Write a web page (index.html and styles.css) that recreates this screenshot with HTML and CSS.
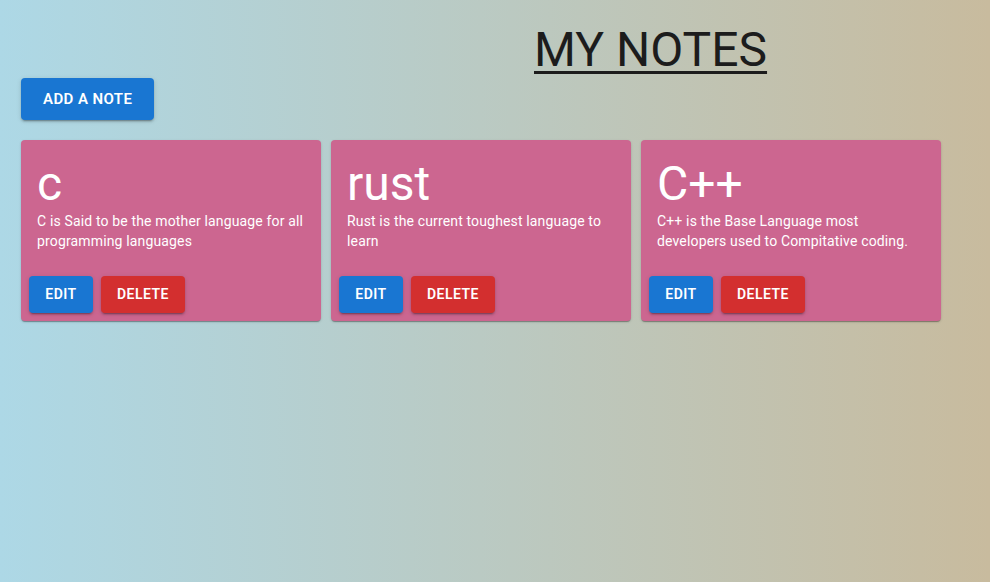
FILE: index.html
```html
<!DOCTYPE html>
<html>
<head>
<meta charset="utf-8">
<link rel="stylesheet" href="styles.css">
</head>
<body>
<div class="page">
  <header class="header">
    <h1 class="title">MY NOTES</h1>
  </header>
  <button class="btn btn-large btn-primary">Add a note</button>
  <div class="notes">
    <div class="card">
      <div class="card-content">
        <h3 class="card-title">c</h3>
        <p class="card-text">C is Said to be the mother language for all programming languages</p>
      </div>
      <div class="card-actions">
        <button class="btn btn-primary">Edit</button>
        <button class="btn btn-error">Delete</button>
      </div>
    </div>
    <div class="card">
      <div class="card-content">
        <h3 class="card-title">rust</h3>
        <p class="card-text">Rust is the current toughest language to learn</p>
      </div>
      <div class="card-actions">
        <button class="btn btn-primary">Edit</button>
        <button class="btn btn-error">Delete</button>
      </div>
    </div>
    <div class="card">
      <div class="card-content">
        <h3 class="card-title">C++</h3>
        <p class="card-text">C++ is the Base Language most developers used to Compitative coding.</p>
      </div>
      <div class="card-actions">
        <button class="btn btn-primary">Edit</button>
        <button class="btn btn-error">Delete</button>
      </div>
    </div>
  </div>
</div>
</body>
</html>
```
FILE: styles.css
```css
html, body {
  margin: 0;
  padding: 0;
  height: 100%;
}
body {
  background: linear-gradient(to right, #add8e6, #c8bb9e);
  font-family: Roboto, "Noto Sans", sans-serif;
  color: #1c1c1c;
}
.page {
  padding: 22px 21px 0 21px;
}
.header {
  display: flex;
  padding-left: 513px;
}
.title {
  margin: 0;
  font-size: 48px;
  font-weight: 400;
  line-height: 56px;
  text-decoration: underline;
  text-decoration-thickness: 3px;
  text-underline-offset: 5px;
  color: #1c1c1c;
}
.btn {
  font-family: Roboto, "Noto Sans", sans-serif;
  border: 0;
  border-radius: 4px;
  text-transform: uppercase;
  font-weight: 600;
  font-size: 14px;
  line-height: 24.5px;
  letter-spacing: 0.46px;
  padding: 6px 16px;
  min-width: 64px;
  color: #fff;
  cursor: pointer;
  box-shadow: 0 3px 1px -2px rgba(0,0,0,0.2), 0 2px 2px 0 rgba(0,0,0,0.14), 0 1px 5px 0 rgba(0,0,0,0.12);
}
.btn-large {
  font-size: 15px;
  line-height: 26.25px;
  padding: 8px 22px;
  letter-spacing: 0.4px;
}
.btn-primary { background: #1976d2; }
.btn-error { background: #d32f2f; }
.notes {
  display: flex;
  gap: 10px;
  margin-top: 20px;
}
.card {
  width: 300px;
  background: #cc6690;
  border-radius: 4px;
  color: #fff;
  box-shadow: 0 2px 1px -1px rgba(0,0,0,0.2), 0 1px 1px 0 rgba(0,0,0,0.14), 0 1px 3px 0 rgba(0,0,0,0.12);
}
.card-content {
  padding: 16px;
}
.card-title {
  margin: 0;
  font-size: 48px;
  font-weight: 400;
  line-height: 55px;
}
.card-text {
  margin: 0;
  font-size: 14px;
  line-height: 20px;
  letter-spacing: 0.15px;
}
.card-actions {
  display: flex;
  gap: 8px;
  padding: 8px;
  padding-top: 9px;
}
```
